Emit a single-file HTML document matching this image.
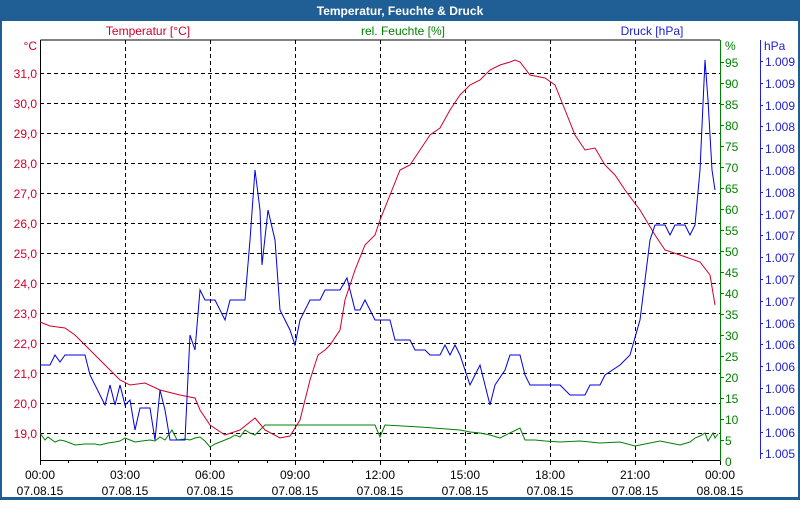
<!DOCTYPE html>
<html><head><meta charset="utf-8"><style>
body{margin:0;width:800px;height:500px;overflow:hidden;background:#fff;font-family:"Liberation Sans",sans-serif}
</style></head><body>
<svg width="800" height="500" xmlns="http://www.w3.org/2000/svg" font-family="Liberation Sans, sans-serif" font-size="12">
<rect x="0" y="0" width="800" height="500" fill="#1f5f96"/>
<rect x="2" y="21" width="796" height="476" fill="#fff"/>
<text x="400" y="15" fill="#fff" font-weight="bold" font-size="12" text-anchor="middle">Temperatur, Feuchte &amp; Druck</text>
<text x="148" y="35" fill="#d0002a" text-anchor="middle">Temperatur [°C]</text>
<text x="403" y="35" fill="#008000" text-anchor="middle">rel. Feuchte [%]</text>
<text x="652" y="35" fill="#2020d0" text-anchor="middle">Druck [hPa]</text>
<g stroke="#000" stroke-dasharray="4,3" stroke-width="1">
<line x1="40" x2="720" y1="73.5" y2="73.5"/><line x1="40" x2="720" y1="103.5" y2="103.5"/><line x1="40" x2="720" y1="133.5" y2="133.5"/><line x1="40" x2="720" y1="163.5" y2="163.5"/><line x1="40" x2="720" y1="193.5" y2="193.5"/><line x1="40" x2="720" y1="223.5" y2="223.5"/><line x1="40" x2="720" y1="253.5" y2="253.5"/><line x1="40" x2="720" y1="283.5" y2="283.5"/><line x1="40" x2="720" y1="313.5" y2="313.5"/><line x1="40" x2="720" y1="343.5" y2="343.5"/><line x1="40" x2="720" y1="373.5" y2="373.5"/><line x1="40" x2="720" y1="403.5" y2="403.5"/><line x1="40" x2="720" y1="433.5" y2="433.5"/>
<line y1="40" y2="460" x1="125.5" x2="125.5"/><line y1="40" y2="460" x1="210.5" x2="210.5"/><line y1="40" y2="460" x1="295.5" x2="295.5"/><line y1="40" y2="460" x1="380.5" x2="380.5"/><line y1="40" y2="460" x1="465.5" x2="465.5"/><line y1="40" y2="460" x1="550.5" x2="550.5"/><line y1="40" y2="460" x1="635.5" x2="635.5"/>
</g>
<path d="M40.5 40V460.5H720M40.5 40H720" stroke="#000" fill="none"/>
<g stroke="#000"><path d="M40.5 460v5M68.5 460v3M97.5 460v3M125.5 460v5M153.5 460v3M182.5 460v3M210.5 460v5M238.5 460v3M267.5 460v3M295.5 460v5M323.5 460v3M352.5 460v3M380.5 460v5M408.5 460v3M437.5 460v3M465.5 460v5M493.5 460v3M522.5 460v3M550.5 460v5M578.5 460v3M607.5 460v3M635.5 460v5M663.5 460v3M692.5 460v3M720.5 460v5"/></g>
<path d="M720.5 40V461" stroke="#008000"/>
<path d="M760.5 40V459" stroke="#2020d0"/>
<g fill="#d0002a" text-anchor="end">
<text x="37" y="50">°C</text>
<text x="37" y="78">31,0</text><text x="37" y="108">30,0</text><text x="37" y="138">29,0</text><text x="37" y="168">28,0</text><text x="37" y="198">27,0</text><text x="37" y="228">26,0</text><text x="37" y="258">25,0</text><text x="37" y="288">24,0</text><text x="37" y="318">23,0</text><text x="37" y="348">22,0</text><text x="37" y="378">21,0</text><text x="37" y="408">20,0</text><text x="37" y="438">19,0</text>
</g>
<g fill="#008000">
<text x="725" y="50">%</text>
<text x="725" y="67">95</text><text x="725" y="88">90</text><text x="725" y="109">85</text><text x="725" y="130">80</text><text x="725" y="151">75</text><text x="725" y="172">70</text><text x="725" y="193">65</text><text x="725" y="214">60</text><text x="725" y="235">55</text><text x="725" y="256">50</text><text x="725" y="277">45</text><text x="725" y="298">40</text><text x="725" y="319">35</text><text x="725" y="340">30</text><text x="725" y="361">25</text><text x="725" y="382">20</text><text x="725" y="403">15</text><text x="725" y="424">10</text><text x="725" y="445">5</text><text x="725" y="466">0</text>
</g>
<g stroke="#008000"><path d="M720 62.5h4M720 83.5h4M720 104.5h4M720 125.5h4M720 146.5h4M720 167.5h4M720 188.5h4M720 209.5h4M720 230.5h4M720 251.5h4M720 272.5h4M720 293.5h4M720 314.5h4M720 335.5h4M720 356.5h4M720 377.5h4M720 398.5h4M720 419.5h4M720 440.5h4"/></g>
<g fill="#2020d0">
<text x="764" y="50">hPa</text>
<text x="765" y="66">1.009</text><text x="765" y="88">1.009</text><text x="765" y="110">1.009</text><text x="765" y="131">1.008</text><text x="765" y="153">1.008</text><text x="765" y="175">1.008</text><text x="765" y="197">1.008</text><text x="765" y="219">1.007</text><text x="765" y="240">1.007</text><text x="765" y="262">1.007</text><text x="765" y="284">1.007</text><text x="765" y="306">1.007</text><text x="765" y="328">1.006</text><text x="765" y="349">1.006</text><text x="765" y="371">1.006</text><text x="765" y="393">1.006</text><text x="765" y="415">1.006</text><text x="765" y="437">1.006</text><text x="765" y="458">1.005</text>
</g>
<g stroke="#2020d0"><path d="M760 61.5h3M760 83.5h3M760 105.5h3M760 126.5h3M760 148.5h3M760 170.5h3M760 192.5h3M760 214.5h3M760 235.5h3M760 257.5h3M760 279.5h3M760 301.5h3M760 323.5h3M760 344.5h3M760 366.5h3M760 388.5h3M760 410.5h3M760 432.5h3M760 453.5h3"/></g>
<g fill="#000" text-anchor="middle">
<text x="40" y="479">00:00</text><text x="40" y="495">07.08.15</text>
<text x="125" y="479">03:00</text><text x="125" y="495">07.08.15</text>
<text x="210" y="479">06:00</text><text x="210" y="495">07.08.15</text>
<text x="295" y="479">09:00</text><text x="295" y="495">07.08.15</text>
<text x="380" y="479">12:00</text><text x="380" y="495">07.08.15</text>
<text x="465" y="479">15:00</text><text x="465" y="495">07.08.15</text>
<text x="550" y="479">18:00</text><text x="550" y="495">07.08.15</text>
<text x="635" y="479">21:00</text><text x="635" y="495">07.08.15</text>
<text x="720" y="479">00:00</text><text x="720" y="495">08.08.15</text>
</g>
<polyline fill="none" stroke="#008000" points="40,433 45,440 48,437 55,442 60,440 65,441 70,443 75,445 85,444 95,444 100,445 108,443 115,442 120,441 125,438 130,440 135,442 142,441 150,440 155,441 160,437 165,440 172,430 177,440 185,439 190,440 195,438 200,437 205,441 210,447 215,444 225,440 230,438 235,435 240,437 245,430 250,433 255,435 260,430 265,425 300,425 340,425 375,425 380,437 385,425 420,427 460,430 470,432 480,433 490,435 500,438 510,433 520,428 525,440 535,440 545,441 560,442 580,441 600,443 620,442 635,446 650,443 660,441 670,443 680,445 690,442 695,438 700,436 705,433 708,441 713,433 715,438 718,434"/>
<polyline fill="none" stroke="#d0002a" points="40,322 50,326 65,328 75,335 90,350 105,365 120,380 130,385 145,383 160,390 180,395 195,398 200,410 210,425 225,435 240,430 255,418 265,430 280,438 290,436 300,420 310,380 318,355 325,350 330,345 340,330 345,300 355,270 365,245 375,235 380,220 390,195 400,170 410,165 420,150 430,135 440,128 450,110 460,95 470,85 480,80 490,70 500,65 510,62 515,60 520,62 530,75 545,78 555,85 565,110 575,135 585,150 595,148 605,165 615,175 625,190 640,210 655,235 665,250 680,255 700,262 710,275 715,305"/>
<polyline fill="none" stroke="#0000e0" points="40,365 50,365 55,355 60,362 65,355 85,355 90,375 100,395 105,405 110,385 115,405 120,385 125,405 130,400 135,430 140,408 150,408 155,440 160,390 165,410 170,440 180,440 185,440 190,335 195,350 200,290 205,300 215,300 225,320 230,300 245,300 250,240 255,170 260,210 262,265 268,210 275,240 280,310 290,330 295,345 300,320 310,300 320,300 325,290 340,290 347,278 355,310 360,310 365,300 375,320 390,320 395,340 410,340 415,350 425,350 430,355 440,355 445,345 450,355 455,345 460,355 465,370 470,385 475,375 480,365 485,385 490,405 495,385 505,370 510,355 520,355 525,375 530,385 560,385 570,395 585,395 590,385 600,385 605,375 620,365 630,355 640,320 650,240 655,225 665,225 670,235 675,225 685,225 690,235 695,225 700,170 705,60 708,100 712,170 715,190"/>
</svg>
</body></html>
